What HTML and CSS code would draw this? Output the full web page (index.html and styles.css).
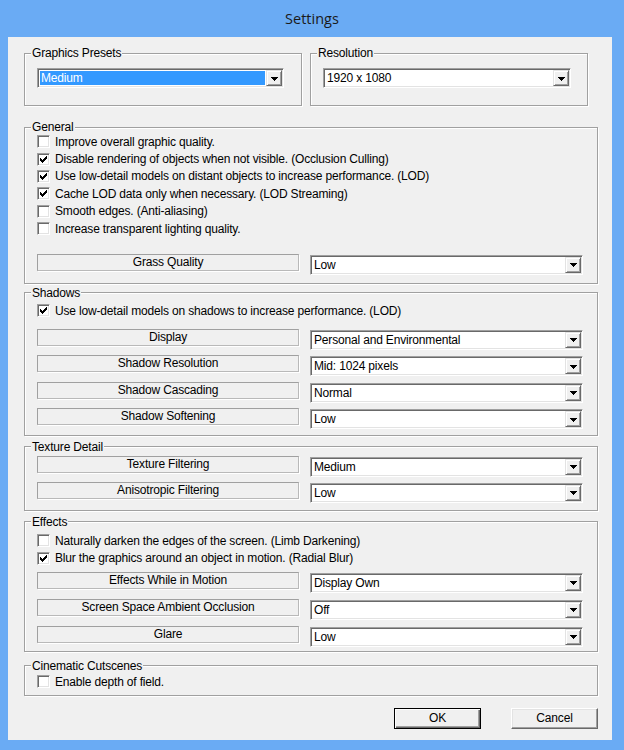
FILE: index.html
```html
<!DOCTYPE html>
<html>
<head>
<meta charset="utf-8">
<link rel="stylesheet" href="styles.css">
</head>
<body>
<div class="window">
  <div class="titlebar">Settings</div>
  <div class="client">
    <div class="top-row">
      <fieldset class="group half">
        <legend>Graphics Presets</legend>
        <div class="gb-body top-body">
          <div class="combo w-preset selected"><span class="combo-text">Medium</span><span class="drop"><svg width="7" height="4" viewBox="0 0 7 4"><path d="M0 0h7v1h-1v1h-1v1h-1v1h-1v-1h-1v-1h-1v-1h-1z"/></svg></span></div>
        </div>
      </fieldset>
      <fieldset class="group half">
        <legend>Resolution</legend>
        <div class="gb-body top-body">
          <div class="combo w-res"><span class="combo-text">1920 x 1080</span><span class="drop"><svg width="7" height="4" viewBox="0 0 7 4"><path d="M0 0h7v1h-1v1h-1v1h-1v1h-1v-1h-1v-1h-1v-1h-1z"/></svg></span></div>
        </div>
      </fieldset>
    </div>

    <fieldset class="group general">
      <legend>General</legend>
      <div class="gb-body general-body">
        <div class="check-row"><span class="cb"></span><span>Improve overall graphic quality.</span></div>
        <div class="check-row"><span class="cb checked"><svg width="9" height="9" viewBox="0 0 9 9"><path transform="translate(1 1)" d="M0 2H1V3H2V4H3V3H4V2H5V1H6V0H7V3H6V4H5V5H4V6H3V7H2V6H1V5H0Z"/></svg></span><span>Disable rendering of objects when not visible. (Occlusion Culling)</span></div>
        <div class="check-row"><span class="cb checked"><svg width="9" height="9" viewBox="0 0 9 9"><path transform="translate(1 1)" d="M0 2H1V3H2V4H3V3H4V2H5V1H6V0H7V3H6V4H5V5H4V6H3V7H2V6H1V5H0Z"/></svg></span><span>Use low-detail models on distant objects to increase performance. (LOD)</span></div>
        <div class="check-row"><span class="cb checked"><svg width="9" height="9" viewBox="0 0 9 9"><path transform="translate(1 1)" d="M0 2H1V3H2V4H3V3H4V2H5V1H6V0H7V3H6V4H5V5H4V6H3V7H2V6H1V5H0Z"/></svg></span><span>Cache LOD data only when necessary. (LOD Streaming)</span></div>
        <div class="check-row"><span class="cb"></span><span>Smooth edges. (Anti-aliasing)</span></div>
        <div class="check-row"><span class="cb"></span><span>Increase transparent lighting quality.</span></div>
        <div class="rows general-rows">
          <div class="opt-row"><div class="lbl">Grass Quality</div><div class="combo w-opt"><span class="combo-text">Low</span><span class="drop"><svg width="7" height="4" viewBox="0 0 7 4"><path d="M0 0h7v1h-1v1h-1v1h-1v1h-1v-1h-1v-1h-1v-1h-1z"/></svg></span></div></div>
        </div>
      </div>
    </fieldset>

    <fieldset class="group shadows">
      <legend>Shadows</legend>
      <div class="gb-body shadows-body">
        <div class="check-row"><span class="cb checked"><svg width="9" height="9" viewBox="0 0 9 9"><path transform="translate(1 1)" d="M0 2H1V3H2V4H3V3H4V2H5V1H6V0H7V3H6V4H5V5H4V6H3V7H2V6H1V5H0Z"/></svg></span><span>Use low-detail models on shadows to increase performance. (LOD)</span></div>
        <div class="rows shadows-rows">
          <div class="opt-row"><div class="lbl">Display</div><div class="combo w-opt"><span class="combo-text">Personal and Environmental</span><span class="drop"><svg width="7" height="4" viewBox="0 0 7 4"><path d="M0 0h7v1h-1v1h-1v1h-1v1h-1v-1h-1v-1h-1v-1h-1z"/></svg></span></div></div>
          <div class="opt-row"><div class="lbl">Shadow Resolution</div><div class="combo w-opt"><span class="combo-text">Mid: 1024 pixels</span><span class="drop"><svg width="7" height="4" viewBox="0 0 7 4"><path d="M0 0h7v1h-1v1h-1v1h-1v1h-1v-1h-1v-1h-1v-1h-1z"/></svg></span></div></div>
          <div class="opt-row"><div class="lbl">Shadow Cascading</div><div class="combo w-opt"><span class="combo-text">Normal</span><span class="drop"><svg width="7" height="4" viewBox="0 0 7 4"><path d="M0 0h7v1h-1v1h-1v1h-1v1h-1v-1h-1v-1h-1v-1h-1z"/></svg></span></div></div>
          <div class="opt-row"><div class="lbl">Shadow Softening</div><div class="combo w-opt"><span class="combo-text">Low</span><span class="drop"><svg width="7" height="4" viewBox="0 0 7 4"><path d="M0 0h7v1h-1v1h-1v1h-1v1h-1v-1h-1v-1h-1v-1h-1z"/></svg></span></div></div>
        </div>
      </div>
    </fieldset>

    <fieldset class="group texture">
      <legend>Texture Detail</legend>
      <div class="gb-body texture-body">
        <div class="rows texture-rows">
          <div class="opt-row"><div class="lbl">Texture Filtering</div><div class="combo w-opt"><span class="combo-text">Medium</span><span class="drop"><svg width="7" height="4" viewBox="0 0 7 4"><path d="M0 0h7v1h-1v1h-1v1h-1v1h-1v-1h-1v-1h-1v-1h-1z"/></svg></span></div></div>
          <div class="opt-row"><div class="lbl">Anisotropic Filtering</div><div class="combo w-opt"><span class="combo-text">Low</span><span class="drop"><svg width="7" height="4" viewBox="0 0 7 4"><path d="M0 0h7v1h-1v1h-1v1h-1v1h-1v-1h-1v-1h-1v-1h-1z"/></svg></span></div></div>
        </div>
      </div>
    </fieldset>

    <fieldset class="group effects">
      <legend>Effects</legend>
      <div class="gb-body effects-body">
        <div class="check-row"><span class="cb"></span><span>Naturally darken the edges of the screen. (Limb Darkening)</span></div>
        <div class="check-row"><span class="cb checked"><svg width="9" height="9" viewBox="0 0 9 9"><path transform="translate(1 1)" d="M0 2H1V3H2V4H3V3H4V2H5V1H6V0H7V3H6V4H5V5H4V6H3V7H2V6H1V5H0Z"/></svg></span><span>Blur the graphics around an object in motion. (Radial Blur)</span></div>
        <div class="rows effects-rows">
          <div class="opt-row"><div class="lbl">Effects While in Motion</div><div class="combo w-opt"><span class="combo-text">Display Own</span><span class="drop"><svg width="7" height="4" viewBox="0 0 7 4"><path d="M0 0h7v1h-1v1h-1v1h-1v1h-1v-1h-1v-1h-1v-1h-1z"/></svg></span></div></div>
          <div class="opt-row"><div class="lbl">Screen Space Ambient Occlusion</div><div class="combo w-opt"><span class="combo-text">Off</span><span class="drop"><svg width="7" height="4" viewBox="0 0 7 4"><path d="M0 0h7v1h-1v1h-1v1h-1v1h-1v-1h-1v-1h-1v-1h-1z"/></svg></span></div></div>
          <div class="opt-row"><div class="lbl">Glare</div><div class="combo w-opt"><span class="combo-text">Low</span><span class="drop"><svg width="7" height="4" viewBox="0 0 7 4"><path d="M0 0h7v1h-1v1h-1v1h-1v1h-1v-1h-1v-1h-1v-1h-1z"/></svg></span></div></div>
        </div>
      </div>
    </fieldset>

    <fieldset class="group cinematic">
      <legend>Cinematic Cutscenes</legend>
      <div class="gb-body cinematic-body">
        <div class="check-row"><span class="cb"></span><span>Enable depth of field.</span></div>
      </div>
    </fieldset>

    <div class="buttons">
      <div class="btn default">OK</div>
      <div class="btn">Cancel</div>
    </div>
  </div>
</div>
</body>
</html>
```

FILE: styles.css
```css
html, body {
  margin: 0;
  padding: 0;
}
body {
  width: 624px;
  height: 750px;
  overflow: hidden;
  background: #6aabf4;
  font-family: "Liberation Sans", Arial, sans-serif;
  font-size: 12px;
  letter-spacing: -0.17px;
  color: #000;
}
.window {
  width: 624px;
  height: 750px;
  background: #6aabf4;
  display: flex;
  flex-direction: column;
}
.titlebar {
  height: 37px;
  line-height: 38px;
  text-align: center;
  font-family: "Open Sans", "Noto Sans", sans-serif;
  font-size: 14.5px;
  letter-spacing: 0;
  color: #1a1a1a;
}
.client {
  margin: 0 12px 0 8px;
  height: 703px;
  box-sizing: border-box;
  background: #f0f0f0;
  padding: 10px 14px 0 16px;
  display: flex;
  flex-direction: column;
}
.top-row {
  display: flex;
  gap: 8px;
}
.group {
  margin: 0;
  padding: 0;
  min-width: 0;
  border: 1px solid #a0a0a0;
  box-shadow: inset 1px 1px #fff, 1px 1px #fff;
  box-sizing: border-box;
}
.group legend {
  margin-left: 6px;
  padding: 0 1px;
  line-height: 12px;
  height: 12px;
  font-size: 12px;
  background: #f0f0f0;
}
.half { width: 278px; }
.general, .shadows, .texture, .effects, .cinematic { width: 574px; }
.general { margin-top: 15px; }
.shadows { margin-top: 3px; }
.texture { margin-top: 5px; }
.effects { margin-top: 5px; }
.cinematic { margin-top: 8px; }

.gb-body { padding: 0 12px; }
.top-body { padding-top: 9px; padding-bottom: 17px; }
.general-body { padding-top: 0; padding-bottom: 8px; }
.shadows-body { padding-top: 3.3px; padding-bottom: 5.5px; }
.texture-body { padding-top: 3px; padding-bottom: 7px; }
.effects-body { padding-top: 4.3px; padding-bottom: 4px; }
.cinematic-body { padding-top: 1.3px; padding-bottom: 4.3px; }

.check-row {
  height: 17.4px;
  display: flex;
  align-items: center;
  white-space: nowrap;
}
.cb {
  width: 13px;
  height: 13px;
  box-sizing: border-box;
  flex: none;
  margin-right: 5px;
  background: #fff;
  border: 1px solid;
  border-color: #a0a0a0 #fff #fff #a0a0a0;
  box-shadow: inset 1px 1px #696969, inset -1px -1px #e3e3e3;
  padding: 1px;
  display: flex;
}
.cb svg { display: block; shape-rendering: crispEdges; }
.cb svg path { fill: #000; }

.rows { display: flex; flex-direction: column; }
.general-rows { margin-top: 16.6px; }
.shadows-rows { margin-top: 9.3px; gap: 5.5px; }
.texture-rows { gap: 5px; }
.effects-rows { margin-top: 4.9px; gap: 6px; }

.opt-row {
  display: flex;
  align-items: flex-start;
  gap: 11px;
  height: 21px;
}
.lbl {
  width: 262px;
  height: 17px;
  box-sizing: border-box;
  border: 1px solid;
  border-color: #a0a0a0 #b9b9b9 #b9b9b9 #a0a0a0;
  box-shadow: 1px 1px #fff;
  text-align: center;
  line-height: 14px;
  white-space: nowrap;
}
.combo {
  height: 20px;
  box-sizing: border-box;
  background: #fff;
  border: 1px solid;
  border-color: #a0a0a0 #fff #fff #a0a0a0;
  box-shadow: inset 1px 1px #696969, inset -1px -1px #e3e3e3;
  padding: 1px;
  display: flex;
  flex: none;
}
.opt-row .combo { margin-top: 1px; }
.w-preset { width: 247px; }
.w-res { width: 248px; }
.w-opt { width: 273px; }
.combo-text {
  flex: 1;
  line-height: 16px;
  padding-left: 2px;
  white-space: nowrap;
  overflow: hidden;
}
.selected .combo-text {
  background: #3399ff;
  color: #fff;
  margin: 1px;
  line-height: 14px;
  padding-left: 1px;
}
.drop {
  width: 16px;
  height: 16px;
  box-sizing: border-box;
  flex: none;
  background: #f0f0f0;
  border: 1px solid;
  border-color: #e3e3e3 #696969 #696969 #e3e3e3;
  box-shadow: inset 1px 1px #fff, inset -1px -1px #a0a0a0;
  display: flex;
  align-items: center;
  justify-content: center;
}
.drop svg { display: block; shape-rendering: crispEdges; margin-top: 1px; }
.drop svg path { fill: #000; }

.buttons {
  margin-top: 12px;
  display: flex;
  justify-content: flex-end;
  gap: 30px;
}
.btn {
  width: 87px;
  height: 21px;
  box-sizing: border-box;
  background: #f0f0f0;
  border: 1px solid;
  border-color: #fff #696969 #696969 #fff;
  box-shadow: inset -1px -1px #a0a0a0, inset 1px 1px #e3e3e3;
  text-align: center;
  line-height: 19px;
}
.btn.default {
  border: 1px solid #000;
  box-shadow: inset 1px 1px #fff, inset -1px -1px #696969, inset -2px -2px #a0a0a0;
}
```
